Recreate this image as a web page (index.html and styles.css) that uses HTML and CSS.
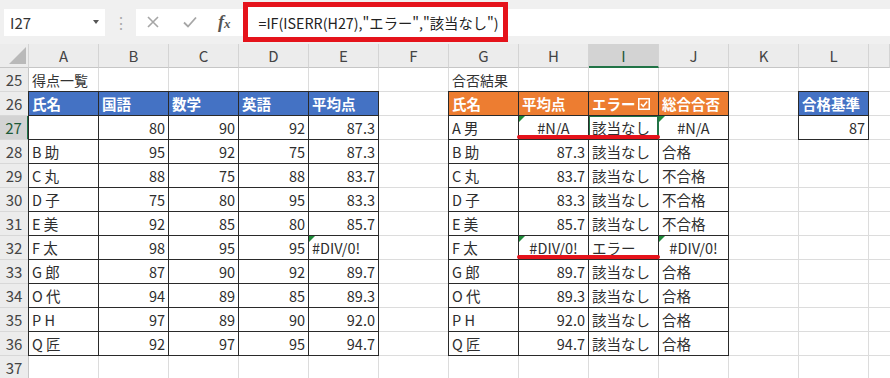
FILE: index.html
```html
<!DOCTYPE html>
<html lang="ja">
<head>
    <meta charset="UTF-8">
    <meta name="viewport" content="width=device-width, initial-scale=1.0">
    <title>合否判定シート</title>
    <link rel="stylesheet" href="styles.css">
</head>
<body>

<!-- Formula bar -->
<div class="fbar">
    <div class="namebox">
        <span>I27</span>
        <span class="caret"></span>
    </div>
    <div class="grip">⋮</div>
    <div class="formula">
        <svg class="fx-btn" width="14" height="14" viewBox="0 0 14 14"><path d="M2 2 L12 12 M12 2 L2 12" stroke="#a6a6a6" stroke-width="1.6" fill="none"/></svg>
        <svg class="fx-btn" width="16" height="14" viewBox="0 0 16 14"><path d="M2 7.5 L6 11.5 L14 2.5" stroke="#a6a6a6" stroke-width="1.8" fill="none"/></svg>
        <span class="fx">f<small>x</small></span>
        <div class="formula-input">=IF(ISERR(H27),"エラー","該当なし")</div>
    </div>
</div>

<!-- Sheet -->
<div class="sheet">
    <div class="corner"><span class="corner-tri"></span></div>
    <div class="colhead">A</div>
    <div class="colhead">B</div>
    <div class="colhead">C</div>
    <div class="colhead">D</div>
    <div class="colhead">E</div>
    <div class="colhead">F</div>
    <div class="colhead">G</div>
    <div class="colhead">H</div>
    <div class="colhead selected">I</div>
    <div class="colhead">J</div>
    <div class="colhead">K</div>
    <div class="colhead">L</div>
    <div class="colhead"></div>

    <div class="rowhead">25</div>
    <div class="rowhead">26</div>
    <div class="rowhead selected">27</div>
    <div class="rowhead">28</div>
    <div class="rowhead">29</div>
    <div class="rowhead">30</div>
    <div class="rowhead">31</div>
    <div class="rowhead">32</div>
    <div class="rowhead">33</div>
    <div class="rowhead">34</div>
    <div class="rowhead">35</div>
    <div class="rowhead">36</div>
    <div class="rowhead">37</div>

    <div class="cells"></div>

    <div class="label label-scores">得点一覧</div>
    <div class="label label-result">合否結果</div>

    <!-- 得点一覧 -->
    <div class="tbl tbl-scores">
        <div class="th blue">氏名</div><div class="th blue">国語</div><div class="th blue">数学</div><div class="th blue">英語</div><div class="th blue">平均点</div>
        <div class="td"></div><div class="td num">80</div><div class="td num">90</div><div class="td num">92</div><div class="td num">87.3</div>
        <div class="td">B 助</div><div class="td num">95</div><div class="td num">92</div><div class="td num">75</div><div class="td num">87.3</div>
        <div class="td">C 丸</div><div class="td num">88</div><div class="td num">75</div><div class="td num">88</div><div class="td num">83.7</div>
        <div class="td">D 子</div><div class="td num">75</div><div class="td num">80</div><div class="td num">95</div><div class="td num">83.3</div>
        <div class="td">E 美</div><div class="td num">92</div><div class="td num">85</div><div class="td num">80</div><div class="td num">85.7</div>
        <div class="td">F 太</div><div class="td num">98</div><div class="td num">95</div><div class="td num">95</div><div class="td err">#DIV/0!</div>
        <div class="td">G 郎</div><div class="td num">87</div><div class="td num">90</div><div class="td num">92</div><div class="td num">89.7</div>
        <div class="td">O 代</div><div class="td num">94</div><div class="td num">89</div><div class="td num">85</div><div class="td num">89.3</div>
        <div class="td">P H</div><div class="td num">97</div><div class="td num">89</div><div class="td num">90</div><div class="td num">92.0</div>
        <div class="td">Q 匠</div><div class="td num">92</div><div class="td num">97</div><div class="td num">95</div><div class="td num">94.7</div>
    </div>

    <!-- 合否結果 -->
    <div class="tbl tbl-result">
        <div class="th orange">氏名</div><div class="th orange">平均点</div>
        <div class="th orange">エラー<svg class="chk" width="12" height="12" viewBox="0 0 12 12"><rect x="0.75" y="0.75" width="10.5" height="10.5" fill="none" stroke="#fff" stroke-width="1.5"/><path d="M3 6 L5.2 8.3 L9.2 3.5" stroke="#fff" stroke-width="1.5" fill="none"/></svg></div>
        <div class="th orange">総合合否</div>
        <div class="td">A 男</div><div class="td mid err">#N/A</div><div class="td sel">該当なし</div><div class="td mid err">#N/A</div>
        <div class="td">B 助</div><div class="td num">87.3</div><div class="td">該当なし</div><div class="td">合格</div>
        <div class="td">C 丸</div><div class="td num">83.7</div><div class="td">該当なし</div><div class="td">不合格</div>
        <div class="td">D 子</div><div class="td num">83.3</div><div class="td">該当なし</div><div class="td">不合格</div>
        <div class="td">E 美</div><div class="td num">85.7</div><div class="td">該当なし</div><div class="td">不合格</div>
        <div class="td">F 太</div><div class="td mid err">#DIV/0!</div><div class="td">エラー</div><div class="td mid err">#DIV/0!</div>
        <div class="td">G 郎</div><div class="td num">89.7</div><div class="td">該当なし</div><div class="td">合格</div>
        <div class="td">O 代</div><div class="td num">89.3</div><div class="td">該当なし</div><div class="td">合格</div>
        <div class="td">P H</div><div class="td num">92.0</div><div class="td">該当なし</div><div class="td">合格</div>
        <div class="td">Q 匠</div><div class="td num">94.7</div><div class="td">該当なし</div><div class="td">合格</div>
    </div>

    <!-- 合格基準 -->
    <div class="tbl tbl-pass">
        <div class="th blue">合格基準</div>
        <div class="td num">87</div>
    </div>

    <!-- red marker lines -->
    <span class="mark mark-27"></span>
    <span class="mark mark-32"></span>
</div>

</body>
</html>
```

FILE: styles.css
```css
body {
    margin: 0;
    font-family: "Noto Sans CJK JP", "Noto Sans", sans-serif;
    font-size: 14px;
    color: #2e2e2e;
    background-color: #fff;
    overflow: hidden;
}

/* ---------- formula bar ---------- */

.fbar {
    height: 44px;
    background-color: #f0f0f0;
    display: flex;
    align-items: center;
    padding-left: 4px;
    box-sizing: border-box;
}

.namebox {
    width: 101px;
    height: 27px;
    background-color: #fff;
    display: flex;
    align-items: center;
    justify-content: space-between;
    padding: 0 6px 0 6px;
    box-sizing: border-box;
    color: #333;
    font-size: 15px;
}

.caret {
    width: 0;
    height: 0;
    border-left: 3px solid transparent;
    border-right: 3px solid transparent;
    border-top: 4px solid #555;
}

.grip {
    width: 31px;
    text-align: center;
    color: #aaa;
    font-size: 16px;
}

.formula {
    flex: 1;
    height: 27px;
    background-color: #fff;
    display: flex;
    align-items: center;
    padding-left: 10px;
    gap: 22px;
}

.fx {
    font-family: "Liberation Serif", serif;
    font-style: italic;
    font-weight: bold;
    font-size: 18px;
    color: #555;
    margin-left: -2px;
}

.fx small {
    font-size: 13px;
}

.formula-input {
    height: 40px;
    width: 265px;
    border: 5px solid #e5131b;
    box-sizing: border-box;
    background-color: #fff;
    display: flex;
    align-items: center;
    padding: 0 0 0 11px;
    margin-left: -10px;
    font-size: 14.3px;
    color: #222;
    white-space: nowrap;
}

/* ---------- sheet grid ---------- */

.sheet {
    position: relative;
    display: grid;
    grid-template-columns: 29px repeat(12, 70px) 1fr;
    grid-template-rows: repeat(14, 24px);
}

.corner {
    grid-column: 1;
    grid-row: 1;
    background-color: #ececec;
    border-right: 1px solid #d4d4d4;
    border-bottom: 1px solid #c6c6c6;
    display: flex;
    align-items: flex-end;
    justify-content: flex-end;
    padding: 0 2px 3px 0;
}

.corner-tri {
    width: 0;
    height: 0;
    border-left: 17px solid transparent;
    border-bottom: 17px solid #b9b9b9;
}

.colhead {
    grid-row: 1;
    background-color: #ececec;
    border-right: 1px solid #d4d4d4;
    border-bottom: 1px solid #c6c6c6;
    text-align: center;
    line-height: 24px;
    color: #444;
    font-size: 15px;
}

.colhead.selected {
    background-color: #d3d3d3;
    border-bottom: 2px solid #217346;
    color: #1d5a38;
}

.rowhead {
    grid-column: 1;
    background-color: #ececec;
    border-right: 1px solid #c6c6c6;
    border-bottom: 1px solid #d8d8d8;
    text-align: center;
    line-height: 24px;
    color: #444;
    font-size: 15px;
}

.rowhead.selected {
    background-color: #d3d3d3;
    border-right: 2px solid #217346;
    color: #1d5a38;
}

/* light gridlines behind everything */
.cells {
    grid-column: 2 / -1;
    grid-row: 2 / -1;
    background-image:
        linear-gradient(to left, #dcdcdc 1px, transparent 1px),
        linear-gradient(to top, #dcdcdc 1px, transparent 1px);
    background-size: 70px 24px;
}

.label {
    grid-row: 2;
    line-height: 24px;
    padding-left: 3px;
    color: #333;
}

.label-scores { grid-column: 2; }
.label-result { grid-column: 8; }

/* ---------- bordered tables ---------- */

.tbl {
    display: grid;
    grid-auto-rows: 1fr;
    border-left: 1px solid #2a2a2a;
    border-top: 1px solid #2a2a2a;
    margin: -1px 0 0 -1px;
    background-color: #fff;
    position: relative;
}

.tbl-scores {
    grid-column: 2 / span 5;
    grid-row: 3 / span 11;
    grid-template-columns: repeat(5, 1fr);
}

.tbl-result {
    grid-column: 8 / span 4;
    grid-row: 3 / span 11;
    grid-template-columns: repeat(4, 1fr);
}

.tbl-pass {
    grid-column: 13;
    grid-row: 3 / span 2;
    grid-template-columns: 1fr;
}

.th,
.td {
    border-right: 1px solid #2a2a2a;
    border-bottom: 1px solid #2a2a2a;
    padding: 0 3px;
    display: flex;
    align-items: center;
    white-space: nowrap;
    position: relative;
    font-size: 14.5px;
}

.th {
    color: #fff;
    font-weight: bold;
}

.blue { background-color: #4472c4; }
.orange { background-color: #ed7d31; }

.chk {
    margin-left: 2px;
}

.num { justify-content: flex-end; }
.mid { justify-content: center; }

/* error indicator in the top-left corner */
.err::before {
    content: "";
    position: absolute;
    left: 0;
    top: 0;
    border-top: 6px solid #1f8a3a;
    border-right: 6px solid transparent;
}

.sel {
    box-shadow: inset 0 0 0 1px #217346;
    border-right-color: #217346;
}

/* ---------- red marker lines ---------- */

.mark {
    position: absolute;
    left: 517px;
    width: 143px;
    height: 4px;
    border-radius: 2px;
    background-color: #e5131b;
}

.mark-27 { top: 91px; }
.mark-32 { top: 211px; }
```
